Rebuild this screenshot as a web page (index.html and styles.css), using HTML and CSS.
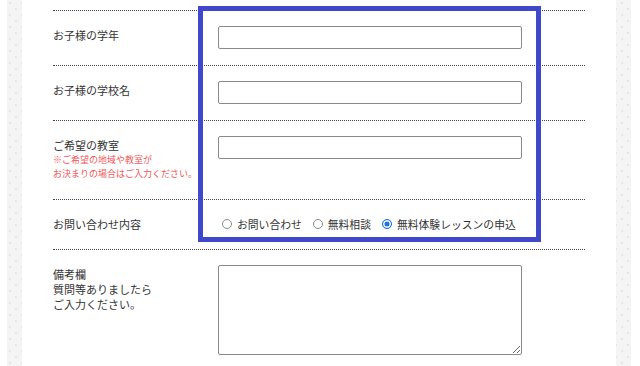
FILE: index.html
```html
<!DOCTYPE html>
<html lang="ja">
<head>
  <meta charset="UTF-8" />
  <meta name="viewport" content="width=device-width, initial-scale=1.0" />
  <title>お問い合わせフォーム</title>
  <link rel="stylesheet" href="styles.css">
</head>
<body>
  <div class="page">
    <div class="sheet">
      <form class="form">
        <div class="row">
          <div class="label">お子様の学年</div>
          <div class="field"><input class="text" type="text" name="grade"></div>
        </div>
        <div class="row">
          <div class="label">お子様の学校名</div>
          <div class="field"><input class="text" type="text" name="school"></div>
        </div>
        <div class="row">
          <div class="label">
            ご希望の教室
            <p class="note">※ご希望の地域や教室が<br>お決まりの場合はご入力ください。</p>
          </div>
          <div class="field"><input class="text" type="text" name="room"></div>
        </div>
        <div class="row">
          <div class="label">お問い合わせ内容</div>
          <div class="field radios">
            <label class="option"><input type="radio" name="kind"><span>お問い合わせ</span></label>
            <label class="option"><input type="radio" name="kind"><span>無料相談</span></label>
            <label class="option"><input type="radio" name="kind" checked><span>無料体験レッスンの申込</span></label>
          </div>
        </div>
        <div class="row">
          <div class="label">備考欄<br>質問等ありましたら<br>ご入力ください。</div>
          <div class="field"><textarea class="memo" name="memo"></textarea></div>
        </div>
      </form>
    </div>
  </div>
  <div class="highlight"></div>
</body>
</html>
```

FILE: styles.css
```css
* { box-sizing: border-box; }
body {
  margin: 0; height: 366px; overflow: hidden;
  background: #fff;
  font-family: "Noto Sans CJK JP", "Noto Sans", sans-serif;
  font-size: 11px; color: #333;
}
.page {
  margin-left: 7px; width: 624px; height: 366px;
  padding: 0 15px;
  background-color: #f4f4f4;
  background-image:
    radial-gradient(circle at 3px 3px, #e6e6e6 1px, transparent 1.5px),
    radial-gradient(circle at 9px 9px, #e6e6e6 1px, transparent 1.5px);
  background-size: 12px 12px;
}
.sheet { background: #fff; height: 100%; padding: 10px 31px 0; }
.row {
  display: grid; grid-template-columns: 165px 304px;
  border-top: 1px dotted #444;
  padding: 15px 0 16px;
}
.label { padding-top: 2px; line-height: 15px; color: #333; }
.note { margin: 0; color: #f0575a; font-size: 9px; line-height: 14px; padding-bottom: 2px; }
.text {
  display: block; width: 304px; height: 23px;
  border: 1px solid #8a8a8a; border-radius: 2px;
  background: #fff; font: inherit;
}
.radios {
  display: flex; align-items: center; height: 18px;
  font-size: 10.8px; white-space: nowrap;
}
.option { display: flex; align-items: center; flex-shrink: 0; margin-right: 11px; color: #333; }
.option input {
  appearance: none; -webkit-appearance: none; flex-shrink: 0;
  width: 10px; height: 10px; margin: 0 5px 0 4px;
  border: 1px solid #8a8a8a; border-radius: 50%; background: #fff;
}
.option + .option input { margin-left: 0; }
.option input:checked {
  border-color: #1a73e8; background: #1a73e8;
  box-shadow: inset 0 0 0 1.5px #fff;
}
.memo {
  display: block; width: 304px; height: 90px;
  border: 1px solid #8a8a8a; border-radius: 2px;
  font: inherit;
}
.highlight {
  position: absolute; left: 198px; top: 6px;
  width: 343px; height: 236px;
  border: 5px solid #3f48cc;
}
```
